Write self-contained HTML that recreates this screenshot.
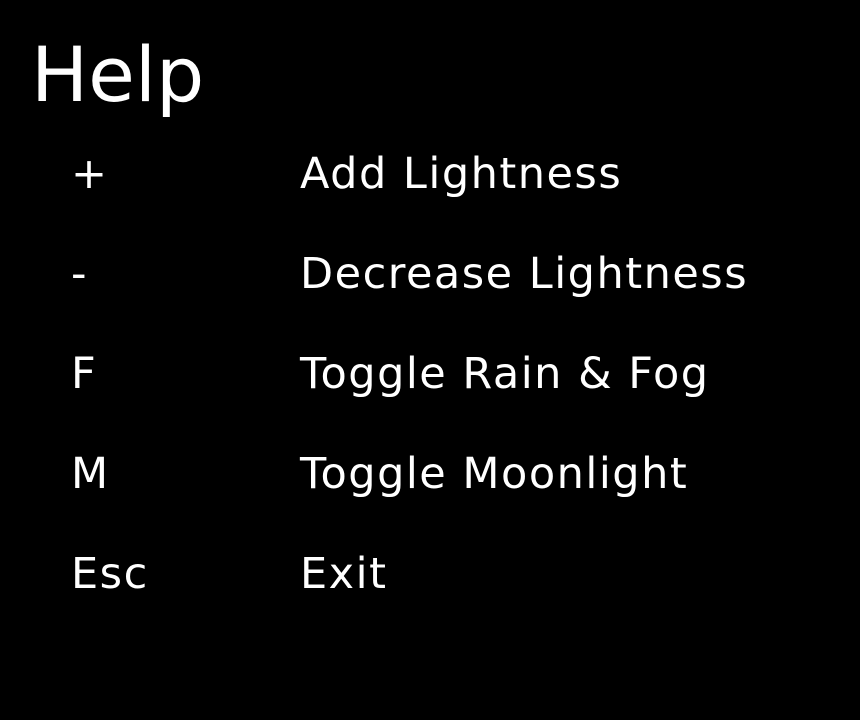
<!DOCTYPE html>
<html><head><style>
body{margin:0;width:860px;height:720px;background:#000;color:#fff;font-family:"DejaVu Sans",sans-serif;position:relative;overflow:hidden}
div{position:absolute;white-space:nowrap;line-height:1}
.h{font-size:76px;left:31px;top:37px}
.k,.v{font-size:43px;letter-spacing:1.5px}
.k{left:71px}.v{left:300px}
</style></head><body>
<div class="h">Help</div>
<div class="k" style="top:153px">+</div><div class="v" style="top:153px">Add Lightness</div>
<div class="k" style="top:253px">-</div><div class="v" style="top:253px">Decrease Lightness</div>
<div class="k" style="top:353px">F</div><div class="v" style="top:353px">Toggle Rain &amp; Fog</div>
<div class="k" style="top:453px">M</div><div class="v" style="top:453px">Toggle Moonlight</div>
<div class="k" style="top:553px">Esc</div><div class="v" style="top:553px">Exit</div>
</body></html>
